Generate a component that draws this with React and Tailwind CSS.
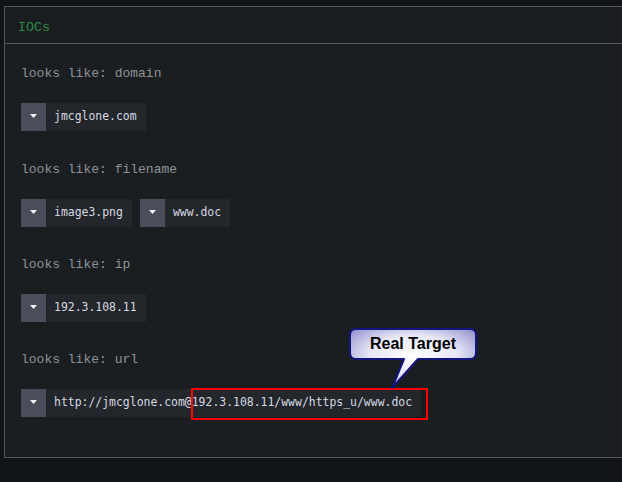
import React from "react";

const mono = { fontFamily: '"Liberation Mono", "DejaVu Sans Mono", monospace' };

function Caret() {
  return (
    <svg width="7" height="4" viewBox="0 0 7 4" className="block">
      <path d="M0 0 H7 L3.5 4 Z" fill="#f2f2f2" />
    </svg>
  );
}

function Chip({ text }) {
  return (
    <div className="flex h-[28px] items-stretch">
      <div className="flex w-[25px] items-center justify-center bg-[#4b4d5a] pb-[2px]">
        <Caret />
      </div>
      <div
        className="flex items-center bg-[#23262b] pl-[8px] pr-[9px] text-[11.45px] text-[#d6dae2]"
        style={{ fontFamily: '"DejaVu Sans Mono", "Liberation Mono", monospace' }}
      >
        {text}
      </div>
    </div>
  );
}

function Section({ label, items, first }) {
  return (
    <div className={first ? "mb-[31px]" : "mb-[30px]"}>
      <div className="h-[16px] text-[13px] leading-[16px] text-[#8e9297]" style={mono}>
        looks like: {label}
      </div>
      <div className="mt-[21px] flex gap-[8px]">
        {items.map((t) => (
          <Chip key={t} text={t} />
        ))}
      </div>
    </div>
  );
}

export default function App() {
  return (
    <div className="relative h-[482px] w-[622px] overflow-hidden bg-[#121518] pl-[4px] pt-[6px]">
      <div className="h-[452px] w-[660px] border border-[#56585a] bg-[#1b1e21]">
        <div
          className="flex h-[37px] items-center border-b border-[#56585a] pl-[13px] pt-[5px] text-[13.3px] text-[#2f8a41]"
          style={mono}
        >
          IOCs
        </div>
        <div className="pl-[16px] pt-[22px]">
          <Section first label="domain" items={["jmcglone.com"]} />
          <Section label="filename" items={["image3.png", "www.doc"]} />
          <Section label="ip" items={["192.3.108.11"]} />
          <Section label="url" items={["http://jmcglone.com@192.3.108.11/www/https_u/www.doc"]} />
        </div>
      </div>

      {/* red highlight */}
      <div className="absolute left-[191px] top-[388px] h-[32px] w-[237px] border-2 border-[#ff0000]" />

      {/* callout */}
      <div className="absolute left-[348px] top-[327px] h-[64px] w-[132px]">
        <svg width="132" height="64" viewBox="0 0 132 64" className="absolute left-0 top-0">
          <defs>
            <radialGradient id="cg" cx="50%" cy="45%" r="70%">
              <stop offset="0%" stopColor="#ffffff" />
              <stop offset="50%" stopColor="#e6e6f6" />
              <stop offset="100%" stopColor="#8383c8" />
            </radialGradient>
          </defs>
          <path
            d="M8 2 H122 Q128 2 128 8 V26 Q128 32 122 32 H70 L44 61 L56 32 H8 Q2 32 2 26 V8 Q2 2 8 2 Z"
            fill="url(#cg)"
            stroke="#14147e"
            strokeWidth="2"
            strokeLinejoin="round"
          />
        </svg>
        <div
          className="absolute left-[2px] top-[3px] flex h-[28px] w-[126px] items-center justify-center text-[16px] font-bold text-black"
          style={{ fontFamily: '"Liberation Sans", Arial, sans-serif' }}
        >
          Real Target
        </div>
      </div>
    </div>
  );
}
